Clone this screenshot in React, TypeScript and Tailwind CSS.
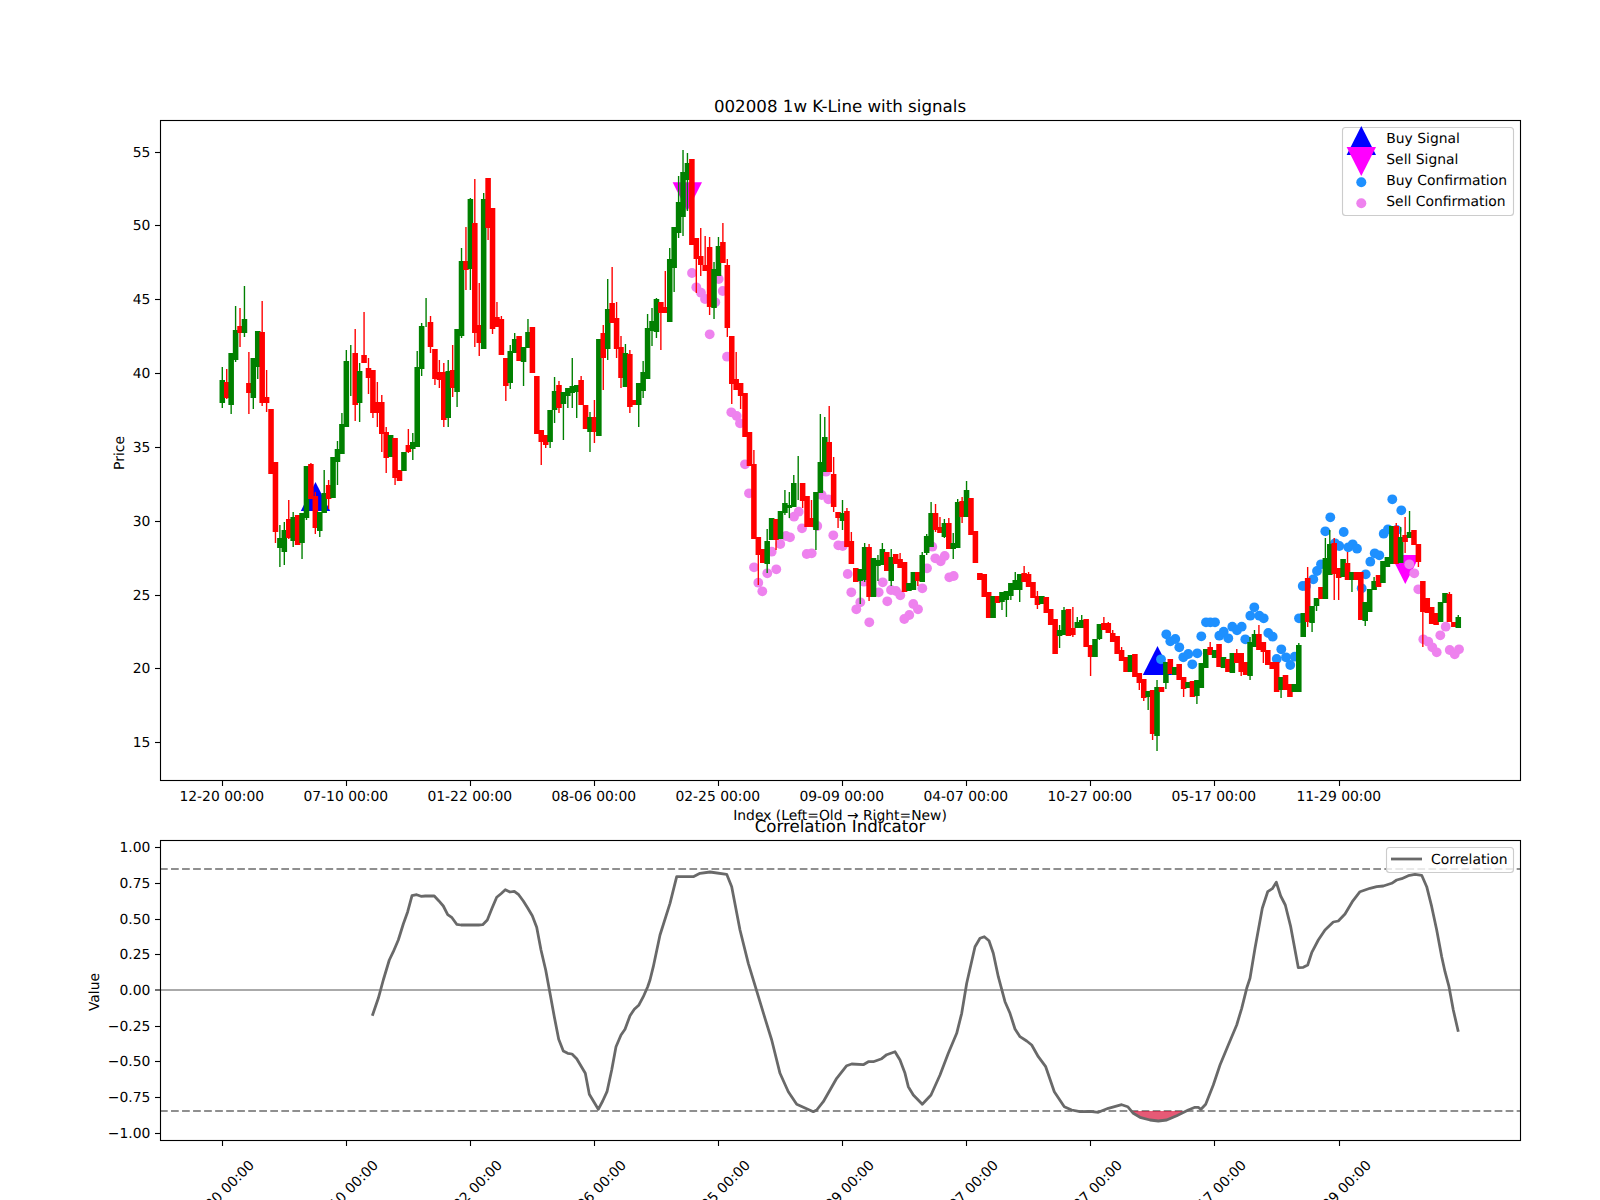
const CANDLES = `
g 380 403 367 408|r 382 398 369 399|g 353 405 353 414|g 330 360 306 362|r 326 333 308 347|g 319 333 286 337|r 383 393 352 414|g 358 398 358 409
g 331 367 331 379|r 332 403 301 406|r 397 403 370 412|r 409 474 409 474|r 462 532 462 543|g 538 548 525 567|g 530 552 522 565|r 519 538 500 539
g 517 541 512 547|r 515 545 515 545|g 513 543 513 559|g 466 518 466 520|r 464 499 463 499|r 496 528 492 534|g 512 531 512 537|g 493 513 470 513
r 485 499 480 509|g 457 498 457 498|g 449 462 441 485|g 424 454 413 454|g 361 427 350 427|g 370 370 345 396|r 353 405 329 421|g 371 403 363 422
r 355 363 312 363|r 368 378 358 394|r 370 413 370 418|r 402 413 382 427|r 402 434 395 452|r 432 458 427 473|g 435 457 435 457|r 438 478 438 485
r 470 481 470 481|g 452 471 452 471|r 445 452 429 453|g 442 449 433 460|g 367 447 351 447|g 326 369 323 376|g 325 325 298 327|r 322 347 316 353
r 349 379 349 385|r 372 380 360 388|r 372 420 363 427|g 371 418 360 427|r 370 388 345 397|g 329 392 329 407|g 261 336 248 338|r 261 270 227 290
g 199 269 198 290|r 223 333 179 347|r 325 343 283 356|g 199 349 193 349|r 178 228 178 240|r 208 329 208 334|r 317 327 302 327|r 319 355 316 355
r 358 386 358 401|g 351 383 345 389|g 339 353 333 353|r 336 361 336 361|g 347 362 347 386|g 332 348 319 348|r 327 373 327 373|r 376 434 376 434
r 430 442 430 465|r 435 445 435 448|g 410 442 410 448|g 391 410 377 423|r 385 408 381 413|g 392 404 392 440|g 388 396 388 408|g 386 393 358 408
g 385 392 385 418|r 380 405 376 405|r 405 429 405 429|g 417 432 412 452|r 417 432 400 443|g 339 436 339 436|r 333 358 325 390|g 309 349 279 360
r 303 323 267 323|r 318 349 302 358|r 347 378 336 388|g 353 387 344 387|r 354 407 350 413|r 400 405 400 405|g 383 405 383 427|g 372 391 361 398
g 328 379 314 379|g 321 331 308 346|g 299 332 298 338|r 302 313 302 350|r 307 313 271 313|g 259 322 248 322|g 227 268 227 292|g 202 233 176 238
g 172 217 150 236|g 163 180 153 211|r 159 245 159 245|r 238 259 238 293|r 256 265 228 276|r 265 271 236 271|r 247 307 237 315|g 269 308 262 319
g 246 276 237 276|r 242 263 223 263|r 265 328 259 337|r 336 384 336 404|r 379 390 352 390|r 383 396 383 409|r 393 437 393 437|r 432 466 432 466
r 464 539 450 539|r 537 555 537 585|r 549 563 549 563|g 541 564 529 573|g 518 540 518 540|r 519 540 519 550|g 511 539 511 539|g 503 513 490 515
g 505 508 492 518|g 483 507 475 507|g 480 480 456 500|r 483 501 483 508|r 496 527 496 527|r 518 527 500 527|g 492 530 492 550|g 462 493 414 493
g 437 472 417 472|r 442 472 406 472|r 474 507 457 512|r 512 518 512 528|g 513 521 500 530|r 511 547 508 547|r 541 564 532 564|r 568 582 568 582
g 569 581 569 604|g 547 580 543 582|r 547 597 544 601|g 558 597 558 597|g 560 566 555 581|g 549 565 543 565|r 552 571 552 571|g 557 581 549 586
r 554 564 554 564|r 559 568 553 568|r 562 592 562 592|g 583 591 583 591|g 572 590 572 590|r 572 581 572 586|g 555 582 552 582|g 536 553 534 555
g 513 547 502 547|r 513 530 504 532|r 527 533 517 533|g 523 537 519 538|r 523 549 518 549|g 543 549 533 559|g 502 548 499 548|r 501 517 497 523
g 490 517 481 517|r 498 535 498 535|r 531 563 531 563|r 573 580 573 580|r 574 597 574 597|r 592 618 592 618|g 596 618 596 618|r 596 603 596 603
g 592 602 592 610|g 591 600 591 617|g 583 596 583 600|g 580 590 572 590|g 574 590 574 602|r 573 582 566 582|r 574 587 572 587|r 582 598 582 598
r 596 605 591 609|g 596 604 596 604|r 597 613 597 613|r 609 625 609 625|r 619 654 619 654|g 630 636 625 648|g 610 635 607 635|r 609 636 609 636
r 628 635 607 637|g 622 628 617 628|g 620 628 615 628|r 619 647 619 647|r 645 657 645 676|g 639 657 639 657|g 624 639 624 640|r 623 630 617 630
r 623 633 622 633|r 633 642 630 642|r 636 654 636 654|r 650 661 647 661|r 657 672 657 672|g 655 672 655 672|r 654 677 654 677|r 673 683 673 690
r 679 698 679 701|g 691 697 691 710|r 690 734 690 740|g 687 736 680 751|r 687 692 687 692|g 662 683 662 689|r 659 674 659 674|g 667 675 667 675
r 664 680 664 680|r 677 689 677 697|g 682 688 682 688|r 681 697 681 697|g 680 696 680 704|g 663 688 663 688|g 649 668 649 668|r 647 655 642 655
g 650 658 650 658|r 644 667 644 667|g 657 668 657 668|r 659 672 659 672|g 653 673 653 673|r 653 663 649 663|r 653 672 653 676|r 662 675 662 675
g 642 676 637 680|g 634 647 630 647|r 634 650 625 650|r 642 652 642 663|r 650 665 650 665|r 662 669 662 669|r 662 692 662 692|g 677 690 677 698
r 675 690 675 690|r 684 697 684 697|g 684 692 684 692|g 645 692 643 692|g 613 637 613 637|r 578 622 567 627|g 606 623 606 632|g 598 606 598 611
r 587 599 587 599|g 558 599 538 599|g 544 575 530 575|r 543 574 538 600|r 568 578 568 600|g 559 577 559 577|r 563 580 552 580|g 572 580 572 592
r 572 580 572 580|r 572 620 572 620|g 602 621 602 626|g 589 612 589 612|g 581 590 577 590|r 575 587 575 587|g 561 583 561 583|g 557 567 557 567
g 526 564 526 564|r 526 564 523 564|g 537 563 527 563|r 535 542 517 553|g 532 538 511 538|r 530 545 530 545|r 544 562 544 567|r 581 612 581 647
r 598 613 598 613|r 607 624 607 624|r 613 625 613 625|g 602 622 602 622|g 593 603 593 603|r 594 622 592 622|r 622 627 622 627|g 617 628 615 628
`
  .trim()
  .split(/[|\n]/)
  .map((row) => {
    const [c, top, bot, hi, lo] = row.trim().split(' ')
    return { color: c === 'g' ? '#008000' : '#ff0000', top: +top, bot: +bot, hi: +hi, lo: +lo }
  })

const SELL_DOTS = [
  [692, 273], [696.3, 287.3], [701, 292.7], [705, 299], [715.3, 302.3], [709.7, 334.3], [718.7, 279], [722.7, 291],
  [727, 356.7], [731.3, 412.3], [736.7, 416], [740, 423.3], [745, 464.3], [749, 493.3], [754, 567.3], [758.3, 582.7],
  [762.3, 591.3], [767.3, 573.3], [776.3, 569.3], [771.7, 551.7], [780.3, 544], [786, 536], [790, 537.3], [794, 516.7],
  [798.7, 511.7], [802, 528.3], [806.7, 554], [811.7, 553.3], [817.3, 526], [821.7, 495], [828.3, 499.3], [826, 471.7],
  [833.3, 535.3], [838.3, 545.3], [842.7, 546], [847.7, 574], [851.3, 592.3], [860.3, 602.3], [856.3, 609.3], [869.3, 622.3],
  [864, 581.7], [878.7, 592.3], [882.7, 582.3], [887.3, 601.3], [891, 590], [896, 591], [900.3, 595.3], [913.3, 604],
  [918, 609.3], [909.3, 615], [904.3, 619], [922.3, 588.3], [927, 568.3], [932.3, 546.7], [935.3, 558.3], [940.7, 561.3],
  [944.7, 556], [949.3, 577.3], [953.7, 576], [1409.3, 564.3], [1414.3, 573.3], [1418.3, 589.3], [1423.3, 639.3],
  [1428.3, 641.7], [1432.3, 647.3], [1436.7, 652.3], [1440.3, 635.3], [1445.7, 626.7], [1449.7, 650], [1454.7, 654.3], [1459, 649.3],
]

const BUY_DOTS = [
  [1161, 659.3], [1166.3, 634.3], [1170.3, 641.3], [1175.3, 639], [1179.3, 647.3], [1183.3, 657.3], [1188.3, 654], [1192.3, 664.3],
  [1197.3, 653.3], [1201.3, 636.3], [1206, 622.3], [1210.3, 622.3], [1215, 622.3], [1219.3, 635.7], [1223.7, 631.7], [1228.3, 638.3],
  [1232.3, 626.7], [1237, 630.3], [1241.7, 626.7], [1245.3, 639.3], [1250.3, 615.7], [1254.3, 607.3], [1259.3, 615.7], [1263.7, 618.3],
  [1268.3, 633], [1272.7, 636.7], [1276.7, 659], [1281.3, 649.3], [1286, 657.3], [1290.3, 665], [1294.7, 656.7], [1299, 618.3],
  [1302.7, 586], [1306, 586], [1313.3, 579.3], [1317, 571], [1321, 564.3], [1325.3, 531.3], [1330.3, 517.3], [1335, 543.3],
  [1339.3, 546], [1343.7, 532], [1348.3, 547.3], [1352.7, 544.3], [1357, 548.7], [1361.7, 588.3], [1365.7, 574.3], [1370.3, 561.7],
  [1374.7, 553.3], [1379.3, 555.3], [1383.7, 533.7], [1388, 529.3], [1392.3, 499.3], [1396.7, 530], [1401.3, 510.3],
]

const X_LABELS = ['12-20', '07-10', '01-22', '08-06', '02-25', '09-09', '04-07', '10-27', '05-17', '11-29']
const X_TICKS = [222.5, 346.5, 470.5, 594.5, 718.5, 842.5, 966.5, 1090.5, 1214.5, 1339.5]
const PRICE_TICKS = [
  [55, 152.5], [50, 225.5], [45, 299.5], [40, 373.5], [35, 447.5], [30, 521.5], [25, 595.5], [20, 668.5], [15, 742.5],
]
const CORR_TICKS = [
  ['1.00', 847.5], ['0.75', 883.5], ['0.50', 919.5], ['0.25', 954.5], ['0.00', 990], ['−0.25', 1026.5], ['−0.50', 1061.5], ['−0.75', 1097.5], ['−1.00', 1133.5],
]

// traced from the plot, grouped by x offset
const CORR_PARTS: [number, number[]][] = [
  [150, [667,737,685,685,700,630,718,570,730,545,745,510,760,462,773,425,786,377,800,374,813,379,826,378,853,378,866,392,880,408,893,434,906,443,920,463,933,465,960,465,986,465,998,464,1012,450,1026,415,1040,382,1053,371,1066,359,1080,366,1093,364,1106,374,1120,393,1133,414,1147,437,1160,472,1173,540,1187,600,1200,670,1213,740,1226,808,1240,843,1253,850,1266,852,1280,866,1293,888,1306,910,1318,973,1345,1018,1358,993,1371,965,1385,900,1398,830,1413,795,1425,778,1440,737,1453,718,1466,706,1480,680,1493,650]],
  [650, [0,630,10,590,30,495,60,400,80,320,130,320,150,310,180,306,230,313,245,350,270,480,295,580,345,745,365,810,390,910,415,965,440,1003,490,1025,500,1020,520,995,560,925,590,887,605,882,640,884,655,875,670,875,695,866,710,854,735,845,750,870,765,910,775,950,790,975,817,1003,843,975,870,915,895,850,920,790,935,730,950,640,975,530,990,505,1003,500,1017,512,1030,550,1045,620,1065,695,1080,730,1095,777,1110,800,1130,813,1145,825,1165,860,1187,890,1213,965,1243,1010,1265,1020,1290,1025,1320,1024,1345,1027]],
  [1100, [25,1015,65,1004,83,1010,100,1030,120,1042,150,1050,175,1053,200,1050,230,1037,265,1020,285,1012,295,1012,303,1018,317,1003,340,945,360,885,385,825,410,765,425,715,440,655,450,625,465,535,487,415,503,365,517,356,529,337,542,378,556,405,572,470,595,593,610,592,623,585,635,548,655,510,675,480,700,456,715,453,735,432,757,395,780,365,810,355,830,350,850,348,875,340,890,330,905,326,925,317,945,313,965,316,980,350,995,410,1010,480,1025,560,1035,605,1047,650,1060,720,1075,785]],
]

function tracePoints() {
  const pts: string[] = []
  for (const [base, vals] of CORR_PARTS) {
    for (let i = 0; i < vals.length; i += 2) {
      pts.push(`${(base + vals[i] / 3).toFixed(1)},${(770 + vals[i + 1] / 3).toFixed(1)}`)
    }
  }
  return pts.join(' ')
}

const candleX = (i: number) => 222.3 + i * 4.43

function Tri({ x, y, down, color }: { x: number; y: number; down?: boolean; color: string }) {
  // x,y = centre of the marker
  const pts = down
    ? `${x - 14.7},${y - 14.5} ${x + 14.7},${y - 14.5} ${x},${y + 14.5}`
    : `${x - 14.7},${y + 14.5} ${x + 14.7},${y + 14.5} ${x},${y - 14.5}`
  return <polygon points={pts} fill={color} />
}

function PriceChart() {
  return (
    <svg width={1600} height={820} viewBox="0 0 1600 820" className="block overflow-visible text-[13.89px] [text-rendering:geometricPrecision]">
      <text x={840} y={112} textAnchor="middle" className="text-[16.67px]">002008 1w K-Line with signals</text>

      <Tri x={315.5} y={496.5} color="#0000ff" />
      <Tri x={1157.5} y={660.5} color="#0000ff" />
      <Tri x={687.3} y={196.8} down color="#ff00ff" />
      <Tri x={1405.3} y={569.5} down color="#ff00ff" />

      {BUY_DOTS.map(([x, y], i) => <circle key={i} cx={x} cy={y} r={4.9} fill="#1e90ff" />)}
      {SELL_DOTS.map(([x, y], i) => <circle key={i} cx={x} cy={y} r={4.9} fill="#ee82ee" />)}

      {CANDLES.map((c, i) => (
        <g key={i} stroke={c.color}>
          <line x1={candleX(i)} x2={candleX(i)} y1={c.hi} y2={c.lo} strokeWidth={1.39} />
          <line x1={candleX(i)} x2={candleX(i)} y1={c.top} y2={c.bot} strokeWidth={5.56} />
        </g>
      ))}

      <rect x={160.5} y={120.5} width={1360} height={660} fill="none" stroke="#000" strokeWidth={1.11} />

      {PRICE_TICKS.map(([v, y]) => (
        <g key={v}>
          <line x1={155} x2={160} y1={y} y2={y} stroke="#000" strokeWidth={1.11} />
          <text x={150.3} y={y + 4.3} textAnchor="end">{v}</text>
        </g>
      ))}
      {X_TICKS.map((x, i) => (
        <g key={x}>
          <line x1={x} x2={x} y1={781} y2={786} stroke="#000" strokeWidth={1.11} />
          <text x={x - 0.7} y={801} textAnchor="middle">{X_LABELS[i]} 00:00</text>
        </g>
      ))}
      <text transform="translate(124 453) rotate(-90)" textAnchor="middle">Price</text>
      <text x={840} y={820} textAnchor="middle">Index (Left=Old → Right=New)</text>

      <rect x={1342.5} y={127.5} width={171} height={88} rx={3} fill="#fff" fillOpacity={0.8} stroke="#ccc" strokeWidth={1.11} />
      <Tri x={1361.3} y={140.5} color="#0000ff" />
      <Tri x={1361.3} y={161.5} down color="#ff00ff" />
      <circle cx={1361.3} cy={182.3} r={5} fill="#1e90ff" />
      <circle cx={1361.3} cy={203.3} r={5} fill="#ee82ee" />
      <text x={1386.3} y={143.3}>Buy Signal</text>
      <text x={1386.3} y={164.3}>Sell Signal</text>
      <text x={1386.3} y={185.3}>Buy Confirmation</text>
      <text x={1386.3} y={206.3}>Sell Confirmation</text>
    </svg>
  )
}

function CorrChart() {
  return (
    <svg width={1600} height={380} viewBox="0 820 1600 380" className="block overflow-visible text-[13.89px] [text-rendering:geometricPrecision]">
      <text x={840} y={832} textAnchor="middle" className="text-[16.67px]">Correlation Indicator</text>

      <line x1={160} x2={1520} y1={990} y2={990} stroke="#aaa" strokeWidth={2.08} />
      <line x1={160} x2={1520} y1={869} y2={869} stroke="#8f8f8f" strokeWidth={2.08} strokeDasharray="7.7 3.33" />
      <line x1={160} x2={1520} y1={1111} y2={1111} stroke="#8f8f8f" strokeWidth={2.08} strokeDasharray="7.7 3.33" />

      <polygon
        points="1132,1111 1133.3,1113 1140,1117 1150,1120 1158.3,1121 1166.7,1120 1176.7,1115.7 1184,1111"
        fill="#dc143c"
        fillOpacity={0.7}
      />
      <polyline points={tracePoints()} fill="none" stroke="#696969" strokeWidth={2.78} strokeLinejoin="round" />

      <rect x={160.5} y={840.5} width={1360} height={300} fill="none" stroke="#000" strokeWidth={1.11} />

      {CORR_TICKS.map(([v, y]) => (
        <g key={v}>
          <line x1={155} x2={160} y1={y} y2={y} stroke="#000" strokeWidth={1.11} />
          <text x={150.3} y={+y + 4.6} textAnchor="end">{v}</text>
        </g>
      ))}
      {X_TICKS.map((x, i) => (
        <g key={x}>
          <line x1={x} x2={x} y1={1141} y2={1146} stroke="#000" strokeWidth={1.11} />
          <text transform={`translate(${x - 1} 1192.5) rotate(-45)`} y={5} textAnchor="middle">{X_LABELS[i]} 00:00</text>
        </g>
      ))}
      <text transform="translate(99 992) rotate(-90)" textAnchor="middle">Value</text>

      <rect x={1386.5} y={847.5} width={127} height={25} rx={3} fill="#fff" fillOpacity={0.8} stroke="#ccc" strokeWidth={1.11} />
      <line x1={1391} x2={1422} y1={859} y2={859} stroke="#696969" strokeWidth={2.78} />
      <text x={1431} y={864.3}>Correlation</text>
    </svg>
  )
}

export default function App() {
  return (
    <div className="w-[1600px] h-[1200px] overflow-hidden bg-white text-black font-['DejaVu_Sans',sans-serif]">
      <PriceChart />
      <CorrChart />
    </div>
  )
}
